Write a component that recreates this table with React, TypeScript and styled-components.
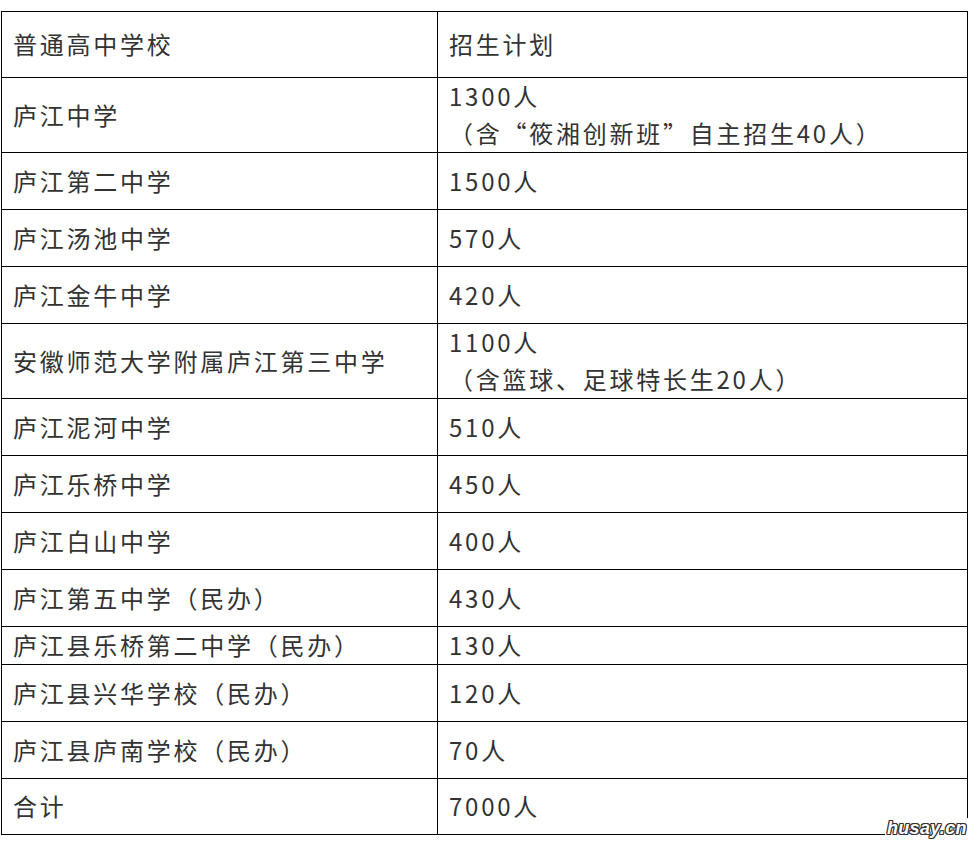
import React from "react";
import styled, { createGlobalStyle } from "styled-components";

const Global = createGlobalStyle`
  html, body { margin: 0; padding: 0; background: #fff; }
  body { font-family: "Noto Sans CJK SC", "Noto Sans", sans-serif; color: #333; }
`;

const Page = styled.div`
  position: relative;
  width: 980px;
  height: 849px;
  padding: 11px 0 0 1px;
  box-sizing: border-box;
`;

const Table = styled.div`
  display: grid;
  grid-template-columns: 436px 530px;
  width: 967px;
  border-top: 1px solid #000;
  border-left: 1px solid #000;
  box-sizing: border-box;
`;

const Cell = styled.div<{ $h: number }>`
  height: ${(p) => p.$h}px;
  box-sizing: border-box;
  border-right: 1px solid #000;
  border-bottom: 1px solid #000;
  padding-left: 11px;
  padding-bottom: 2px;
  display: flex;
  flex-direction: column;
  justify-content: center;
  font-size: 24px;
  line-height: 37px;
  letter-spacing: 2.75px;
  color: #333;
  white-space: nowrap;
`;

const Watermark = styled.div`
  position: absolute;
  left: 885px;
  top: 818px;
  font-family: "Liberation Sans", Arial, sans-serif;
  font-weight: 700;
  font-style: italic;
  font-size: 18px;
  letter-spacing: 0.3px;
  color: #fff;
  text-shadow:
    -1px -1px 0 #333, 1px -1px 0 #333, -1px 1px 0 #333, 1px 1px 0 #333,
    0 -1px 0 #333, 0 1px 0 #333, -1px 0 0 #333, 1px 0 0 #333;
  background: #fff;
  padding: 0 2px;
  line-height: 20px;
`;

type Row = { name: string; plan: string[]; h: number };

const rows: Row[] = [
  { name: "普通高中学校", plan: ["招生计划"], h: 66 },
  { name: "庐江中学", plan: ["1300人", "（含“筱湘创新班”自主招生40人）"], h: 75 },
  { name: "庐江第二中学", plan: ["1500人"], h: 57 },
  { name: "庐江汤池中学", plan: ["570人"], h: 57 },
  { name: "庐江金牛中学", plan: ["420人"], h: 57 },
  { name: "安徽师范大学附属庐江第三中学", plan: ["1100人", "（含篮球、足球特长生20人）"], h: 75 },
  { name: "庐江泥河中学", plan: ["510人"], h: 57 },
  { name: "庐江乐桥中学", plan: ["450人"], h: 57 },
  { name: "庐江白山中学", plan: ["400人"], h: 57 },
  { name: "庐江第五中学（民办）", plan: ["430人"], h: 57 },
  { name: "庐江县乐桥第二中学（民办）", plan: ["130人"], h: 38 },
  { name: "庐江县兴华学校（民办）", plan: ["120人"], h: 57 },
  { name: "庐江县庐南学校（民办）", plan: ["70人"], h: 57 },
  { name: "合计", plan: ["7000人"], h: 56 },
];

export default function App() {
  return (
    <>
      <Global />
      <Page>
        <Table>
          {rows.map((r, i) => (
            <React.Fragment key={i}>
              <Cell $h={r.h}>{r.name}</Cell>
              <Cell $h={r.h}>
                {r.plan.map((l, j) => (
                  <span key={j}>{l}</span>
                ))}
              </Cell>
            </React.Fragment>
          ))}
        </Table>
        <Watermark>husay.cn</Watermark>
      </Page>
    </>
  );
}
